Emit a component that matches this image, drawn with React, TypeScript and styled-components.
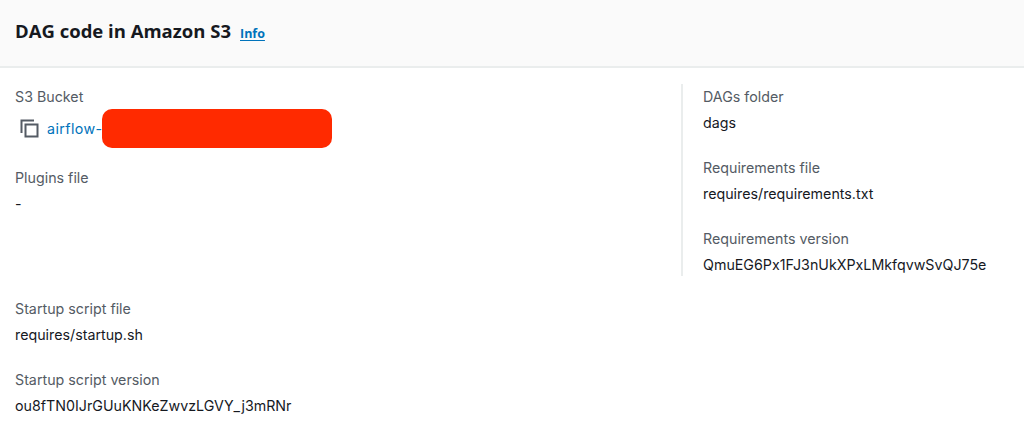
import React from 'react';
import styled, { createGlobalStyle } from 'styled-components';

const GlobalStyle = createGlobalStyle`
  html, body {
    margin: 0;
    padding: 0;
    background: #fff;
  }
  body {
    font-family: Inter, 'Open Sans', sans-serif;
    font-size: 14px;
    color: #16191f;
  }
`;

const Panel = styled.section`
  width: 1024px;
  height: 439px;
  overflow: hidden;
`;

const Header = styled.header`
  height: 68px;
  box-sizing: border-box;
  padding: 0 15px 6px;
  display: flex;
  align-items: center;
  gap: 9px;
  background: #fafafa;
  border-bottom: 2px solid #eaeded;
`;

const Title = styled.h2`
  margin: 0;
  font-family: 'Open Sans', sans-serif;
  font-size: 18.5px;
  font-weight: 700;
  color: #16191f;
`;

const InfoLink = styled.a`
  font-family: 'Open Sans', sans-serif;
  font-size: 12.5px;
  font-weight: 700;
  margin-top: 7px;
  color: #0073bb;
  text-decoration: underline;
  text-underline-offset: 2px;
`;

const Body = styled.div`
  display: grid;
  grid-template-columns: 681px 1fr;
  padding-top: 16px;
`;

const LeftColumn = styled.div`
  padding-left: 15px;
`;

const RightColumn = styled.div`
  border-left: 2px solid #eaeded;
  padding-left: 20px;
  height: 192px;
  box-sizing: border-box;
`;

const Field = styled.div<{ $gap?: number }>`
  margin-bottom: ${(p) => p.$gap ?? 20}px;
`;

const Label = styled.div`
  font-size: 14.25px;
  line-height: 26px;
  color: #545b64;
`;

const Value = styled.div`
  font-size: 14.25px;
  line-height: 25px;
  color: #16191f;
`;

const BucketRow = styled.div`
  display: flex;
  align-items: center;
  height: 25px;
  margin-top: 6px;
  padding-left: 5px;
  gap: 8px;
`;

const BucketLink = styled.a`
  color: #0073bb;
  font-size: 14.25px;
  letter-spacing: 0.4px;
`;

const Redaction = styled.span`
  width: 230px;
  height: 39px;
  margin-left: -8px;
  border-radius: 10px;
  background: #ff2a00;
`;

const CopyIcon = () => (
  <svg width="19" height="19" viewBox="0 0 19 19" fill="none" stroke="#545b64" strokeWidth="2">
    <path d="M1.5 14V1.5H14" />
    <rect x="5.5" y="5.5" width="12" height="12" />
  </svg>
);

export default function App() {
  return (
    <>
      <GlobalStyle />
      <Panel>
        <Header>
          <Title>DAG code in Amazon S3</Title>
          <InfoLink>Info</InfoLink>
        </Header>
        <Body>
          <LeftColumn>
            <Field $gap={24}>
              <Label>S3 Bucket</Label>
              <BucketRow>
                <CopyIcon />
                <BucketLink>airflow-</BucketLink>
                <Redaction />
              </BucketRow>
            </Field>
            <Field $gap={80}>
              <Label>Plugins file</Label>
              <Value>-</Value>
            </Field>
            <Field>
              <Label>Startup script file</Label>
              <Value>requires/startup.sh</Value>
            </Field>
            <Field>
              <Label>Startup script version</Label>
              <Value>ou8fTN0IJrGUuKNKeZwvzLGVY_j3mRNr</Value>
            </Field>
          </LeftColumn>
          <RightColumn>
            <Field>
              <Label>DAGs folder</Label>
              <Value>dags</Value>
            </Field>
            <Field>
              <Label>Requirements file</Label>
              <Value>requires/requirements.txt</Value>
            </Field>
            <Field>
              <Label>Requirements version</Label>
              <Value>QmuEG6Px1FJ3nUkXPxLMkfqvwSvQJ75e</Value>
            </Field>
          </RightColumn>
        </Body>
      </Panel>
    </>
  );
}
